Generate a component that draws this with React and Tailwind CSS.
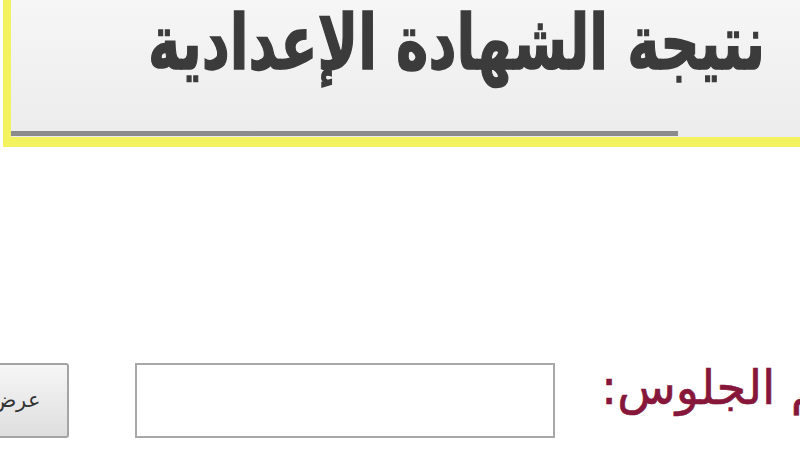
export default function App() {
  return (
    <div className="w-[800px] h-[450px] overflow-hidden bg-white relative" style={{ fontFamily: '"DejaVu Sans", sans-serif' }}>
      {/* header */}
      <div className="ml-[3px] -mr-[10px] h-[147px] border-l-[8px] border-b-[10px] border-[#f3f35f] bg-gradient-to-b from-[#f6f6f6] to-[#ececec] flex flex-col overflow-hidden">
        <div className="flex-1 flex justify-end items-start pr-[45px]">
          <h1 dir="rtl" className="shrink-0 text-[76px] leading-[96px] -mt-[5px] font-bold text-[#3b3b3b] whitespace-nowrap origin-right scale-x-[0.72] [-webkit-text-stroke:1.5px_#3b3b3b]">
            نتيجة الشهادة الإعدادية
          </h1>
        </div>
        <div className="h-[5px] w-[667px] bg-[#8c8c8c] mb-[1px]"></div>
      </div>

      {/* form row */}
      <div className="mt-[216px] flex items-center">
        <button className="-ml-[50px] w-[119px] h-[75px] shrink-0 border-2 border-[#a4a4a4] rounded-[3px] bg-gradient-to-b from-[#f6f6f6] to-[#dedede] flex items-center justify-end pr-[26px] overflow-hidden">
          <span dir="rtl" className="text-[21px] text-[#333] whitespace-nowrap" style={{ fontFamily: '"DejaVu Serif", serif' }}>عرض النتيجة</span>
        </button>
        <div className="ml-[66px] w-[420px] h-[75px] shrink-0 border-2 border-[#a8a8a8] bg-white"></div>
        <div className="ml-[46px] shrink-0 -mt-[28px]">
          <span dir="rtl" className="block text-[48px] leading-[60px] text-[#86163a] whitespace-nowrap [-webkit-text-stroke:0.6px_#86163a]">رقم الجلوس:</span>
        </div>
      </div>
    </div>
  );
}
